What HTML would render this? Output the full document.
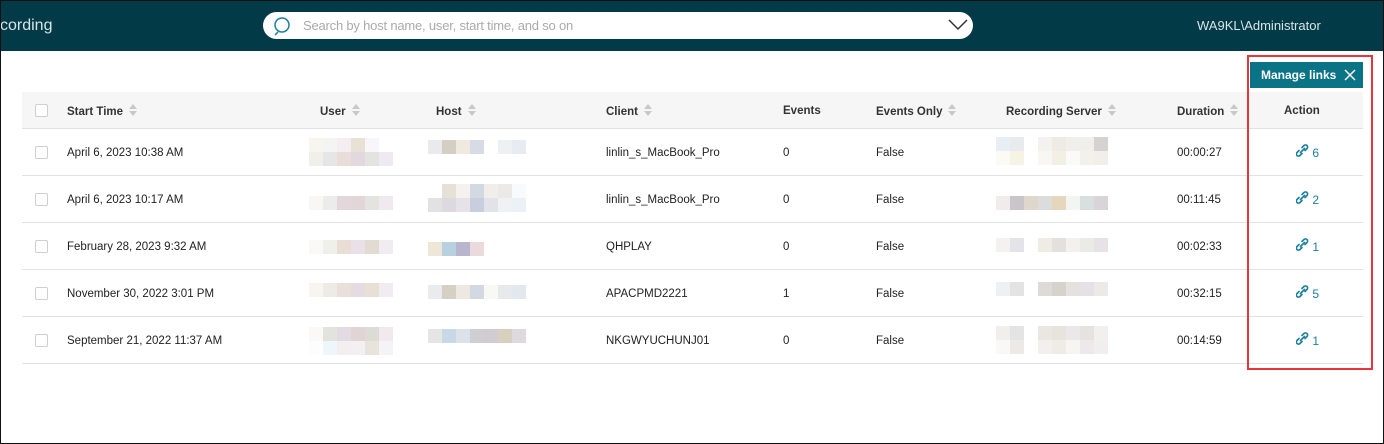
<!DOCTYPE html>
<html><head><meta charset="utf-8"><style>
*{margin:0;padding:0;box-sizing:border-box}
body{width:1384px;height:444px;position:relative;background:#fff;font-family:"Liberation Sans",sans-serif;overflow:hidden;color:#222}
.frame{position:absolute;left:0;top:0;width:1384px;height:444px;border:1px solid #111;pointer-events:none;z-index:9}
.hdr{position:absolute;left:0;top:0;width:1384px;height:51px;background:#023b47}
.title{position:absolute;left:0;top:17px;color:#d8e4e6;font-size:16px}
.search{position:absolute;left:263px;top:12px;width:710px;height:27px;background:#fff;border-radius:14px}
.search span{position:absolute;left:40px;top:6px;font-size:13px;color:#aaa;letter-spacing:-.2px}
.user{position:absolute;left:1197px;top:18px;color:#d8e4e6;font-size:13px}
.thead{position:absolute;left:22px;top:92px;width:1341px;height:37px;background:#f6f6f6}
.t{position:absolute;font-size:11.5px;white-space:nowrap;margin-top:2px;line-height:14px}
.h{font-weight:bold;font-size:11.5px;color:#333}
.line{position:absolute;left:22px;width:1341px;height:1px;background:#e2e2e2}
.cb{position:absolute;left:35px;width:13px;height:13px;border:1px solid #cfcfcf;border-radius:2px;background:#fff}
.sort{display:inline-block;vertical-align:-1px;margin-left:6px;width:8px;height:12px;position:relative}
.sort:before{content:"";position:absolute;left:0;top:0;border-left:4px solid transparent;border-right:4px solid transparent;border-bottom:5px solid #c8c8c8}
.sort:after{content:"";position:absolute;left:0;top:7px;border-left:4px solid transparent;border-right:4px solid transparent;border-top:5px solid #c8c8c8}
.btn{position:absolute;left:1250px;top:62px;width:113px;height:26px;background:#0a7386;color:#fff;font-weight:bold;font-size:12px;padding:6px 0 0 11px}
.red{position:absolute;left:1247px;top:55px;width:126px;height:315px;border:2px solid #e8343b}
.act{position:absolute;left:1296px;font-size:12px;color:#1a7f99;margin-top:-2px}
.act svg{vertical-align:0}
.m{position:absolute;display:flex;flex-wrap:wrap}
.m i{display:block;width:14px;height:14px}
</style></head><body>
<div class="hdr">
<div class="title">cording</div>
<div class="search"><svg style="position:absolute;left:9px;top:4px" width="20" height="20" viewBox="0 0 20 20"><circle cx="10" cy="9" r="7" fill="none" stroke="#1a7f99" stroke-width="1.5"/><line x1="6" y1="16" x2="3" y2="19" stroke="#1a7f99" stroke-width="1.5"/></svg><span>Search by host name, user, start time, and so on</span>
<svg style="position:absolute;left:685px;top:7px" width="20" height="12" viewBox="0 0 20 12"><path d="M1 1 L10 10 L19 1" fill="none" stroke="#333" stroke-width="1.5"/></svg></div>
<div class="user">WA9KL\Administrator</div>
</div>
<div class="btn">Manage links <svg style="vertical-align:-2px;margin-left:4px" width="12" height="12" viewBox="0 0 12 12"><path d="M1 1L11 11M11 1L1 11" stroke="#fff" stroke-width="1.5"/></svg></div>
<div class="thead"></div>
<div class="cb" style="top:104px"></div>
<div class="t h" style="left:67px;top:102px">Start Time<span class="sort"></span></div>
<div class="t h" style="left:320px;top:102px">User<span class="sort"></span></div>
<div class="t h" style="left:436px;top:102px">Host<span class="sort"></span></div>
<div class="t h" style="left:606px;top:102px">Client<span class="sort"></span></div>
<div class="t h" style="left:783px;top:102px">Events</div>
<div class="t h" style="left:876px;top:102px">Events Only<span class="sort"></span></div>
<div class="t h" style="left:1006px;top:102px">Recording Server<span class="sort"></span></div>
<div class="t h" style="left:1177px;top:102px">Duration<span class="sort"></span></div>
<div class="t h" style="left:1284px;top:102px">Action</div>

<div class="line" style="top:128px"></div>
<div class="line" style="top:175px"></div>
<div class="line" style="top:222px"></div>
<div class="line" style="top:269px"></div>
<div class="line" style="top:316px"></div>
<div class="line" style="top:363px"></div>

<div class="cb" style="top:146px"></div><div class="t" style="left:67px;top:144px">April 6, 2023 10:38 AM</div>
<div class="t" style="left:606px;top:144px">linlin_s_MacBook_Pro</div><div class="t" style="left:783px;top:144px">0</div><div class="t" style="left:876px;top:144px">False</div><div class="t" style="left:1177px;top:144px">00:00:27</div>

<div class="cb" style="top:193px"></div><div class="t" style="left:67px;top:191px">April 6, 2023 10:17 AM</div>
<div class="t" style="left:606px;top:191px">linlin_s_MacBook_Pro</div><div class="t" style="left:783px;top:191px">0</div><div class="t" style="left:876px;top:191px">False</div><div class="t" style="left:1177px;top:191px">00:11:45</div>

<div class="cb" style="top:240px"></div><div class="t" style="left:67px;top:238px">February 28, 2023 9:32 AM</div>
<div class="t" style="left:606px;top:238px">QHPLAY</div><div class="t" style="left:783px;top:238px">0</div><div class="t" style="left:876px;top:238px">False</div><div class="t" style="left:1177px;top:238px">00:02:33</div>

<div class="cb" style="top:287px"></div><div class="t" style="left:67px;top:285px">November 30, 2022 3:01 PM</div>
<div class="t" style="left:606px;top:285px">APACPMD2221</div><div class="t" style="left:783px;top:285px">1</div><div class="t" style="left:876px;top:285px">False</div><div class="t" style="left:1177px;top:285px">00:32:15</div>

<div class="cb" style="top:334px"></div><div class="t" style="left:67px;top:332px">September 21, 2022 11:37 AM</div>
<div class="t" style="left:606px;top:332px">NKGWYUCHUNJ01</div><div class="t" style="left:783px;top:332px">0</div><div class="t" style="left:876px;top:332px">False</div><div class="t" style="left:1177px;top:332px">00:14:59</div>

<svg width="0" height="0" style="position:absolute"><defs><g id="lk"><path d="M6 3.5 L8 1.5 A2 2 0 0 1 11 4.5 L9 6.5 M6 9.5 L4 11.5 A2 2 0 0 1 1 8.5 L3 6.5 M4.5 8.5 L8.5 4.5" fill="none" stroke="#1a7f99" stroke-width="1.6" stroke-linecap="round"/></g></defs></svg>
<div class="act" style="top:146px"><svg width="13" height="13"><use href="#lk"/></svg> 6</div>
<div class="act" style="top:193px"><svg width="13" height="13"><use href="#lk"/></svg> 2</div>
<div class="act" style="top:240px"><svg width="13" height="13"><use href="#lk"/></svg> 1</div>
<div class="act" style="top:287px"><svg width="13" height="13"><use href="#lk"/></svg> 5</div>
<div class="act" style="top:334px"><svg width="13" height="13"><use href="#lk"/></svg> 1</div>

<div class="m" style="left:309px;top:138px;width:86px"><i style="background:#f8f5ef"></i><i style="background:#f4f4f4"></i><i style="background:#f5eef0"></i><i style="background:#e8e2d6"></i><i style="background:#f8f6fa"></i><i></i><i style="background:#f1efe9"></i><i style="background:#e6e6e6"></i><i style="background:#e8ddd9"></i><i style="background:#e3d8e0"></i><i style="background:#e4e4de"></i><i style="background:#efe9f1"></i></div>
<div class="m" style="left:428px;top:140px;width:104px"><i style="background:#eaeaee"></i><i style="background:#d4cfc2"></i><i style="background:#efe9df"></i><i style="background:#d6dbe5"></i><i></i><i style="background:#eef0f2"></i><i style="background:#e6ecf1"></i></div>
<div class="m" style="left:996px;top:137px;width:116px"><i style="background:#e9eef6"></i><i style="background:#e8eaee"></i><i></i><i style="background:#f3f2ef"></i><i style="background:#eeebe5"></i><i style="background:#f1efec"></i><i style="background:#efefeb"></i><i style="background:#d6d2d2"></i><i style="background:#fcfaf4"></i><i style="background:#f6f2e4"></i><i></i><i style="background:#f8f7f3"></i><i style="background:#f2efe4"></i><i style="background:#fafaf8"></i><i style="background:#f2f1ea"></i><i style="background:#f0efe9"></i></div>
<div class="m" style="left:309px;top:196px;width:86px"><i style="background:#f9f7f3"></i><i style="background:#ececec"></i><i style="background:#e3d7dc"></i><i style="background:#e2d6d9"></i><i style="background:#e3e3df"></i><i style="background:#f0e9ef"></i></div>
<div class="m" style="left:428px;top:184px;width:104px"><i></i><i style="background:#e7e0d7"></i><i style="background:#f4f1ee"></i><i style="background:#d2d9e2"></i><i style="background:#f1ede9"></i><i style="background:#eceae9"></i><i style="background:#f8fafc"></i><i style="background:#e2e2e2"></i><i style="background:#dcd9e1"></i><i style="background:#e5e3e8"></i><i style="background:#c8cedd"></i><i style="background:#e2e3e8"></i><i style="background:#eff1f2"></i><i style="background:#ebf1f7"></i></div>
<div class="m" style="left:996px;top:196px;width:116px"><i style="background:#f1ebec"></i><i style="background:#c9c5c9"></i><i style="background:#e0d7cc"></i><i style="background:#dddcdc"></i><i style="background:#e6d7bc"></i><i style="background:#f3f5f2"></i><i style="background:#d8dfe1"></i><i style="background:#d8d4d8"></i></div>
<div class="m" style="left:309px;top:240px;width:86px"><i style="background:#fbf9f7"></i><i style="background:#eff0ea"></i><i style="background:#e9ddd6"></i><i style="background:#ebe0e7"></i><i style="background:#e2dbd2"></i><i style="background:#f1ebf2"></i></div>
<div class="m" style="left:428px;top:242px;width:60px"><i style="background:#f0e6d8"></i><i style="background:#b8d1e0"></i><i style="background:#b8b6cc"></i><i style="background:#ecd9de"></i></div>
<div class="m" style="left:996px;top:238px;width:116px"><i style="background:#f4f1f0"></i><i style="background:#e5e3ea"></i><i></i><i style="background:#efece6"></i><i style="background:#e3e0dd"></i><i style="background:#f3f1ef"></i><i style="background:#eaeae6"></i><i style="background:#e6e2e5"></i></div>
<div class="m" style="left:309px;top:283px;width:86px"><i style="background:#f8f5f0"></i><i style="background:#ecebe6"></i><i style="background:#eae0da"></i><i style="background:#e5dbe3"></i><i style="background:#e8e0d4"></i><i style="background:#f1ecf2"></i></div>
<div class="m" style="left:428px;top:285px;width:104px"><i style="background:#e9ebef"></i><i style="background:#d5cfc4"></i><i style="background:#ede8e2"></i><i style="background:#d3d9e3"></i><i style="background:#f8f8f4"></i><i style="background:#e7e9ec"></i><i style="background:#e2e8ee"></i></div>
<div class="m" style="left:996px;top:282px;width:116px"><i style="background:#eef0f2"></i><i style="background:#e3e3e3"></i><i></i><i style="background:#dddbd8"></i><i style="background:#d8d2cc"></i><i style="background:#e5e1de"></i><i style="background:#e4e2e4"></i><i style="background:#ece9e6"></i></div>
<div class="m" style="left:309px;top:327px;width:86px"><i style="background:#fbf9f7"></i><i style="background:#e3e3dd"></i><i style="background:#e2dbe3"></i><i style="background:#e0d4d4"></i><i style="background:#dcdbd6"></i><i style="background:#f1e9ee"></i><i style="background:#fdfdfd"></i><i style="background:#eef5fb"></i><i style="background:#f5eef0"></i><i style="background:#f3eff3"></i><i style="background:#e8e4dc"></i><i style="background:#f6f3f7"></i></div>
<div class="m" style="left:428px;top:329px;width:104px"><i style="background:#e5e5e5"></i><i style="background:#c8d8e6"></i><i style="background:#dde2e8"></i><i style="background:#cfcfd3"></i><i style="background:#cfcdcf"></i><i style="background:#d9cfbf"></i><i style="background:#dcdadd"></i></div>
<div class="m" style="left:996px;top:326px;width:116px"><i style="background:#f1efec"></i><i style="background:#e4e4e4"></i><i></i><i style="background:#eae6e2"></i><i style="background:#e9e3de"></i><i style="background:#eae8eb"></i><i style="background:#e5e3e0"></i><i style="background:#f2f0ee"></i><i style="background:#faf8f6"></i><i style="background:#ede9e4"></i><i></i><i style="background:#f2efec"></i><i style="background:#efebe6"></i><i style="background:#f6f5f2"></i><i style="background:#ede9ea"></i><i style="background:#f0eeee"></i></div>

<div class="red"></div>
<div class="frame"></div>
</body></html>
